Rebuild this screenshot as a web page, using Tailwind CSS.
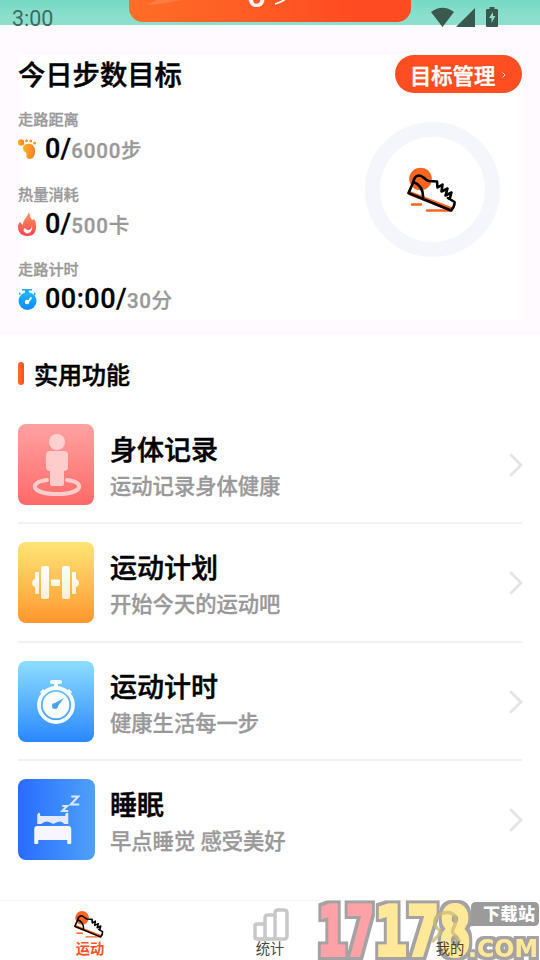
<!DOCTYPE html>
<html lang="zh-CN">
<head>
<meta charset="utf-8">
<title>运动</title>
<script src="https://cdn.jsdelivr.net/npm/@tailwindcss/browser@4"></script>
</head>
<body class="w-[540px] h-[960px] overflow-hidden bg-white font-['Roboto','Noto_Sans_CJK_SC',sans-serif] font-medium text-black relative flex flex-col">
<svg class="absolute w-0 h-0"><defs>
<symbol id="shoe" viewBox="0 0 50 48">
<circle cx="13.500" cy="13" r="11.300" fill="#ff6420"/>
<path d="M3 25 47 42 45 46 1.500 29Z" fill="#ff6420"/>
<path d="M5 38.500H14M20 44.500H44" stroke="#ff6420" stroke-width="2.400" stroke-linecap="round"/>
<path d="M30 15.500 21.500 15C17 13 16 9.500 12 9.500 7 10 7 14 5.500 18L1.500 27 44 44.500Q48 40 47.500 36L41 32M6.500 16Q17 20 16 33" fill="none" stroke="#000" stroke-width="2.600" stroke-linejoin="round" stroke-linecap="round"/>
<path d="m30 15.500 .5 6 5-3-1 7 6-3-2 7 6-3-2 7" fill="none" stroke="#000" stroke-width="2.600" stroke-linejoin="round"/>
</symbol>
<linearGradient id="foot"><stop stop-color="#ffb321"/><stop offset="1" stop-color="#ff7d2d"/></linearGradient>
<linearGradient id="fire" x2="0" y2="1"><stop stop-color="#ff9562"/><stop offset="1" stop-color="#ff4550"/></linearGradient>
<linearGradient id="clock" x2="0" y2="1"><stop stop-color="#25b5ff"/><stop offset="1" stop-color="#078cff"/></linearGradient>
<linearGradient id="pale" x2="0" y2="1"><stop stop-color="#fff"/><stop offset="1" stop-color="#ffefd8"/></linearGradient>
<filter id="outline" x="-10%" y="-10%" width="120%" height="120%"><feMorphology in="SourceAlpha" operator="dilate" radius="3" result="d"/><feFlood flood-color="#a4a2a2"/><feComposite in2="d" operator="in" result="o"/><feMerge><feMergeNode in="o"/><feMergeNode in="SourceGraphic"/></feMerge></filter>
</defs></svg>

<header class="relative z-10 h-[25px] shrink-0 bg-linear-to-b from-[#75d8c3] to-[#8bdfcc] to-60% flex justify-between">
  <span class="pl-3 pt-[8px] text-[21.500px] leading-[22px] font-normal text-[#3d6b61]">3:00</span>
  <svg class="mt-[7px] mr-[41px] w-[68px] h-5" viewBox="0 0 68 20" fill="#39594f"><path d="M0 5Q11.500-3.500 23 5L11.500 20Z"/><path d="M44 1V20H25Z"/><path fill-rule="evenodd" d="M58.500 0h5v2H66q1 0 1 1v16q0 1-1 1H56q-1 0-1-1V3q0-1 1-1h2.500ZM62 5l-4 6h2.500v5l4-7H62Z"/></svg>
  <div class="absolute left-[129px] top-0 w-[282px] h-[22px] rounded-b-[14px] bg-linear-to-r from-[#ff6d27] to-[#ff4b22] to-80% overflow-hidden">
    <svg class="w-full h-full" viewBox="0 0 282 22"><path d="M18 5Q35 4 52 0H28Z" fill="#fff" fill-opacity=".13"/><text x="118" y="6.500" font-size="34" fill="#fff">0</text><path d="M146 4Q153 2 158-2" fill="none" stroke="#fff" stroke-width="1.800"/></svg>
  </div>
</header>

<section class="h-[310px] shrink-0 bg-[#fefaff] px-[18px] pt-[30px]">
  <div class="h-[265px] bg-white">
    <div class="flex justify-between items-start">
      <h1 class="pt-[2px] text-[27.300px] leading-[39px] [-webkit-text-stroke:0.5px]">今日步数目标</h1>
      <button class="w-[127px] h-[38px] rounded-full bg-[#ff4f22] text-white text-[21.300px] leading-[38px] font-medium flex items-center pl-[15px] pt-[5px] [-webkit-text-stroke:0.5px]">目标管理<svg class="ml-[7px] mb-[3px] w-1 h-[6px]" viewBox="0 0 4 6"><path d="m.5.5 2.500 2.500L.5 5.500" fill="none" stroke="#fff" stroke-width=".8"/></svg></button>
    </div>
    <div class="flex justify-between">
      <div class="pt-[13px] [-webkit-text-stroke:0.3px]">
        <div class="h-[75px]">
          <p class="text-[15.200px] leading-[22px] text-[#999]">走路距离</p>
          <p class="flex items-center h-9 text-[27px] tracking-[0.200px]"><svg class="w-[19px] h-5 mr-2 shrink-0" viewBox="0 0 19 20" fill="url(#foot)"><circle cx="3" cy="3.500" r="3.200"/><circle cx="8.500" cy="1.700" r="1.500"/><circle cx="12.700" cy="2" r="1.500"/><circle cx="16.500" cy="4" r="1.500"/><path d="M5 9Q5 5 10 4.700C15 4 18 9 17 14 16 19 14 20 11 20 7 19 9 15 8 13.500Q5 12 5 9Z"/></svg><span>0/<span class="text-[20.500px] tracking-[0.800px] text-[#999]">6000步</span></span></p>
        </div>
        <div class="h-[75px]">
          <p class="text-[15.200px] leading-[22px] text-[#999]">热量消耗</p>
          <p class="flex items-center h-9 text-[27px] tracking-[0.200px]"><svg class="w-[19px] h-6 mr-2 shrink-0" viewBox="0 0 19 24"><path d="M11 0Q12 5 14 8L16 7C18 9 18 12 18 15 18 21 15 24 9.500 24 3 24 0 20 0 15 0 12 1 11 2 10L5 13Q5 9 7 7T11 0Z" fill="url(#fire)"/><path d="M14 13Q14 18 10 18 8 18 7 16 4 18 7 20.500 9 22 11 21 15 19 14 13Z" fill="#fff"/></svg><span>0/<span class="text-[20.500px] tracking-[0.800px] text-[#999]">500卡</span></span></p>
        </div>
        <div class="h-[75px]">
          <p class="text-[15.200px] leading-[22px] text-[#999]">走路计时</p>
          <p class="flex items-center h-9 text-[27px] tracking-[0.500px]"><svg class="w-[19px] h-[21px] mr-2 shrink-0" viewBox="0 0 19 21"><path d="M4 0H14V1.500H11V4H7V1.500H4ZM1 3l2 2-2 1ZM16 3l2 2-2 2Z" fill="#20a9ff"/><circle cx="9.500" cy="12" r="9" fill="url(#clock)"/><path d="m13 9-2.500 3.500" stroke="#fff" stroke-width="1.700" stroke-linecap="round"/><circle cx="9" cy="13" r="2.200" fill="#fff"/></svg><span>00:00/<span class="text-[20.500px] tracking-[0.600px] text-[#999]">30分</span></span></p>
        </div>
      </div>
      <div class="mt-[26px] mr-[22.500px] w-[135px] h-[135px] rounded-full border-[15px] border-[#f5f6fb] flex items-center justify-center"><svg class="w-[50px] h-12 mr-px"><use href="#shoe"/></svg></div>
    </div>
  </div>
</section>

<main class="h-[565px] shrink-0 px-[18px] pt-[19px]">
  <div class="flex items-center h-10 gap-[10px]"><span class="w-[6px] h-[23px] mb-[2px] rounded-[3px] bg-linear-to-r from-[#ff6d27] to-[#ff4b22]"></span><h2 class="text-[24px] leading-10 pt-[3px] [-webkit-text-stroke:0.5px]">实用功能</h2></div>
  <ul class="pt-[11.500px]">
    <li class="h-[118.500px] pt-[18.500px] border-b-2 border-[#f1f1f1] flex">
      <svg class="w-[76px] h-[81px] rounded-lg bg-linear-to-b from-[#ffa1a1] to-[#ff6868] shrink-0" viewBox="0 0 76 81"><path d="M29 56C10 58 13 70 39 70S68 58 49 56" fill="none" stroke="#ffcccc" stroke-width="4" stroke-linecap="round"/><circle cx="39" cy="18" r="8" fill="#ffd0d0"/><path d="M32 27H46Q50 27 50 31V43Q50 47 46 47V60Q46 62 44 62H34Q32 62 32 60V47Q28 47 28 43V31Q28 27 32 27Z" fill="#ffcccc"/></svg>
      <div class="ml-4 pt-[7px] grow"><h3 class="text-[27px] leading-10 [-webkit-text-stroke:0.5px]">身体记录</h3><p class="text-[21.300px] leading-[31px] text-[#999] [-webkit-text-stroke:0.3px]">运动记录身体健康</p></div>
      <svg class="w-[14px] h-6 mt-[28.500px] -mr-px" viewBox="0 0 14 24"><path d="m2 2 10 10L2 22" fill="none" stroke="#e4e4e4" stroke-width="2.800" stroke-linecap="round"/></svg>
    </li>
    <li class="h-[118.500px] pt-[18.300px] border-b-2 border-[#f1f1f1] flex">
      <svg class="w-[76px] h-[81px] rounded-lg bg-linear-to-b from-[#fee575] to-[#ff962b] shrink-0" viewBox="0 0 76 81" fill="url(#pale)"><rect x="23" y="24" width="8" height="33" rx="2"/><rect x="44" y="24" width="8" height="33" rx="2"/><rect x="33" y="37.500" width="9" height="6.500"/><path d="M18 30h2q1 0 1 1v20q0 1-1 1h-2q-1 0-1-1v-6q-3-1-3-4t3-4v-6q0-1 1-1ZM55 30h2q1 0 1 1v6q3 1 3 4t-3 4v6q0 1-1 1h-2q-1 0-1-1V31q0-1 1-1Z"/></svg>
      <div class="ml-4 pt-[7px] grow"><h3 class="text-[27px] leading-10 [-webkit-text-stroke:0.5px]">运动计划</h3><p class="text-[21.300px] leading-[31px] text-[#999] [-webkit-text-stroke:0.3px]">开始今天的运动吧</p></div>
      <svg class="w-[14px] h-6 mt-[28.500px] -mr-px" viewBox="0 0 14 24"><path d="m2 2 10 10L2 22" fill="none" stroke="#e4e4e4" stroke-width="2.800" stroke-linecap="round"/></svg>
    </li>
    <li class="h-[118.500px] pt-[18.500px] border-b-2 border-[#f1f1f1] flex">
      <svg class="w-[76px] h-[81px] rounded-lg bg-linear-to-b from-[#8eddff] to-[#2887ff] shrink-0" viewBox="0 0 76 81"><circle cx="38" cy="44" r="13.300" fill="#fafdff"/><circle cx="38" cy="44" r="17" fill="none" stroke="#f4fbff" stroke-width="3.800"/><path d="M34 19H42Q44 19 44 21T42 23H40V28H36V23H34Q32 23 32 21T34 19ZM22 31 25 28 29 32 25 35ZM47 32 51 28 54 31 51 35Z" fill="#f4fbff"/><path d="M46 37 40 45A3 3 0 1 1 37 42Z" fill="#4aa5f5"/></svg>
      <div class="ml-4 pt-[7px] grow"><h3 class="text-[27px] leading-10 [-webkit-text-stroke:0.5px]">运动计时</h3><p class="text-[21.300px] leading-[31px] text-[#999] [-webkit-text-stroke:0.3px]">健康生活每一步</p></div>
      <svg class="w-[14px] h-6 mt-[28.500px] -mr-px" viewBox="0 0 14 24"><path d="m2 2 10 10L2 22" fill="none" stroke="#e4e4e4" stroke-width="2.800" stroke-linecap="round"/></svg>
    </li>
    <li class="h-[118.500px] pt-[18.300px] flex">
      <svg class="w-[76.500px] h-[81px] rounded-lg bg-linear-to-r from-[#2a6bff] to-[#4fa0f8] shrink-0" viewBox="0 0 76 81"><path d="M20 34Q22 33 22 37H47Q47 33 50 34V45H46Q43 40 35 45 28 40 23 45H19V36Z" fill="#e5e9ff"/><path d="M19 47H50Q53 47 53 50V64Q53 65 52 65H50Q49 65 49 64V61H20V64Q20 65 19 65H17Q16 65 16 64V50Q16 47 19 47Z" fill="#f7f5ff"/><path d="M44 27H49L44 32H50M53 17.500H60L52.500 25.500H61" fill="none" stroke="#dbe8ff" stroke-width="2"/></svg>
      <div class="ml-[15.500px] pt-[7px] grow"><h3 class="text-[27px] leading-10 [-webkit-text-stroke:0.5px]">睡眠</h3><p class="text-[21.300px] leading-[31px] text-[#999] [-webkit-text-stroke:0.3px]">早点睡觉 感受美好</p></div>
      <svg class="w-[14px] h-6 mt-[28.500px] -mr-px" viewBox="0 0 14 24"><path d="m2 2 10 10L2 22" fill="none" stroke="#e4e4e4" stroke-width="2.800" stroke-linecap="round"/></svg>
    </li>
  </ul>
</main>

<nav class="h-[60px] shrink-0 border-t border-[#f7f7f7] grid grid-cols-3 text-[14.300px] leading-5">
  <a class="flex flex-col items-center pt-[9px] text-[#ff5326]"><svg class="w-[32px] h-[29px] mr-[3px]"><use href="#shoe"/></svg><span class="font-bold">运动</span></a>
  <a class="flex flex-col items-center pt-[7px] text-[#444] font-normal"><svg class="w-9 h-[33px] ml-[2px]" viewBox="0 0 36 33" fill="none" stroke="#c8c8c8" stroke-width="3.500" stroke-linejoin="round"><path d="M2 18q0-2 2-2h8v15H4q-2 0-2-2ZM12 31V10q0-3 3-3h7v24ZM22 31V5q0-3 3-3h6q3 0 3 3v23q0 3-3 3Z"/></svg><span class="-mt-[2px]">统计</span></a>
  <a class="relative z-20 flex flex-col items-center pt-[38px] text-[#4b432f] font-normal"><span>我的</span></a>
</nav>

<svg class="absolute left-[310px] top-[895px] w-[230px] h-[65px] z-10" viewBox="0 0 230 65">
  <g font-weight="bold" filter="url(#outline)">
    <g stroke-width="4" stroke-linejoin="miter" font-family="DejaVu Sans Mono">
      <text x="8" y="60" font-size="67" textLength="56" lengthAdjust="spacingAndGlyphs" fill="#ffa2a8" stroke="#ffa2a8">17</text>
      <text x="65" y="60" font-size="67" textLength="96" lengthAdjust="spacingAndGlyphs" fill="#ffe998" stroke="#ffe998">178</text>
    </g>
    <text x="158" y="61.500" font-size="25" textLength="70" lengthAdjust="spacingAndGlyphs" font-family="DejaVu Sans" fill="#ffe998">.COM</text>
  </g>
  <path d="M122 47C129 39 134 38 127 33 118 21 137 13 144 20 150 27 140 35 143 38Q147 42 150 47" fill="none" stroke="#c9b878" stroke-width="3.500" opacity=".75"/>
  <path d="M166 7H224Q229 7 229 12V26Q229 31 224 31H165L155 31.500 161 27V12Q161 7 166 7Z" fill="#9b9b9b"/>
  <text x="173" y="25" font-size="17" textLength="52" font-weight="900" font-family="Noto Sans CJK SC" fill="#fff">下载站</text>
</svg>
</body>
</html>
